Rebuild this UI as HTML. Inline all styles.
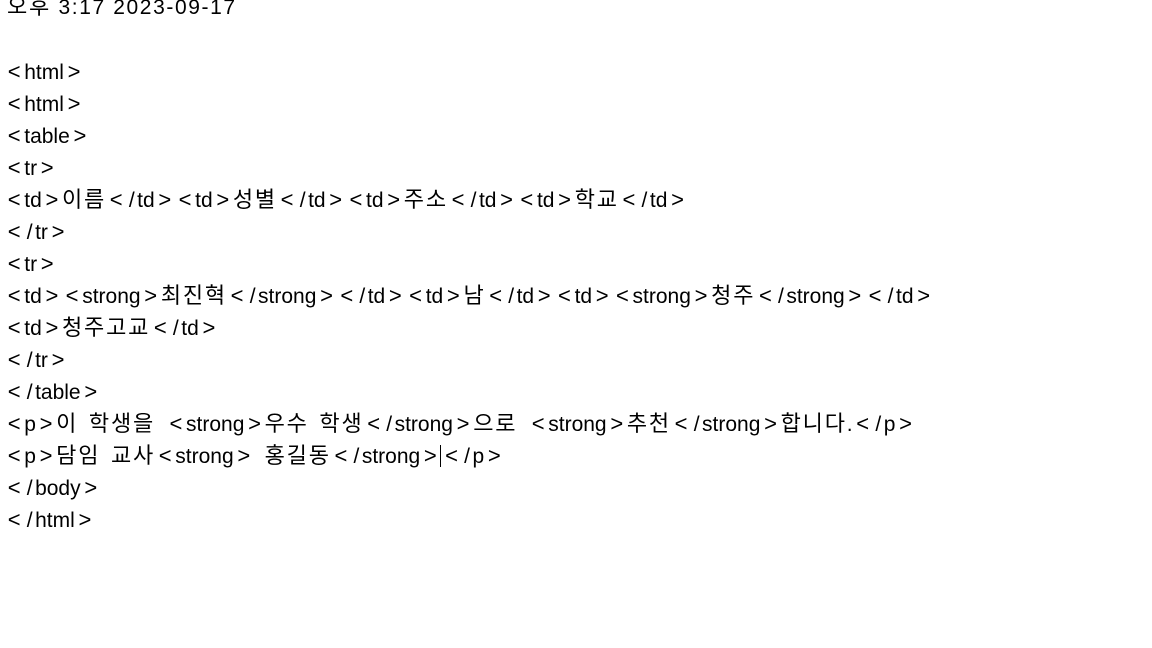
<!DOCTYPE html>
<html><head><meta charset="utf-8"><style>
body{margin:0;background:#fff;width:1152px;height:648px;overflow:hidden}
.t{position:absolute;left:4px;top:-8px;font-family:"Liberation Sans","Noto Sans CJK KR","NanumGothic",sans-serif;font-size:21px;color:#000}
.t div{height:32px;line-height:32px;white-space:pre}
i{font-style:normal;font-family:"Noto Sans CJK KR","NanumGothic",sans-serif;font-size:22px;letter-spacing:1.8px;word-spacing:4px;line-height:1}
u{text-decoration:none;margin:0 3.7px;font-size:22px}
s{text-decoration:none;margin:0 2.5px}
.c{display:inline-block;width:1px;height:22px;background:#000;vertical-align:-4px}
.h{letter-spacing:1.6px;padding-left:3px}
</style></head><body><div class="t"><div class="h"><i>오후</i> 3:17 2023-09-17</div><div></div><div><u>&lt;</u>html<u>&gt;</u></div><div><u>&lt;</u>html<u>&gt;</u></div><div><u>&lt;</u>table<u>&gt;</u></div><div><u>&lt;</u>tr<u>&gt;</u></div><div><u>&lt;</u>td<u>&gt;</u><i>이름</i><u>&lt;</u><s>/</s>td<u>&gt;</u><u>&lt;</u>td<u>&gt;</u><i>성별</i><u>&lt;</u><s>/</s>td<u>&gt;</u><u>&lt;</u>td<u>&gt;</u><i>주소</i><u>&lt;</u><s>/</s>td<u>&gt;</u><u>&lt;</u>td<u>&gt;</u><i>학교</i><u>&lt;</u><s>/</s>td<u>&gt;</u></div><div><u>&lt;</u><s>/</s>tr<u>&gt;</u></div><div><u>&lt;</u>tr<u>&gt;</u></div><div><u>&lt;</u>td<u>&gt;</u><u>&lt;</u>strong<u>&gt;</u><i>최진혁</i><u>&lt;</u><s>/</s>strong<u>&gt;</u><u>&lt;</u><s>/</s>td<u>&gt;</u><u>&lt;</u>td<u>&gt;</u><i>남</i><u>&lt;</u><s>/</s>td<u>&gt;</u><u>&lt;</u>td<u>&gt;</u><u>&lt;</u>strong<u>&gt;</u><i>청주</i><u>&lt;</u><s>/</s>strong<u>&gt;</u><u>&lt;</u><s>/</s>td<u>&gt;</u></div><div><u>&lt;</u>td<u>&gt;</u><i>청주고교</i><u>&lt;</u><s>/</s>td<u>&gt;</u></div><div><u>&lt;</u><s>/</s>tr<u>&gt;</u></div><div><u>&lt;</u><s>/</s>table<u>&gt;</u></div><div><u>&lt;</u>p<u>&gt;</u><i>이 학생을 </i><u>&lt;</u>strong<u>&gt;</u><i>우수 학생</i><u>&lt;</u><s>/</s>strong<u>&gt;</u><i>으로 </i><u>&lt;</u>strong<u>&gt;</u><i>추천</i><u>&lt;</u><s>/</s>strong<u>&gt;</u><i>합니다</i>.<u>&lt;</u><s>/</s>p<u>&gt;</u></div><div><u>&lt;</u>p<u>&gt;</u><i>담임 교사</i><u>&lt;</u>strong<u>&gt;</u><i> 홍길동</i><u>&lt;</u><s>/</s>strong<u>&gt;</u><span class="c"></span><u>&lt;</u><s>/</s>p<u>&gt;</u></div><div><u>&lt;</u><s>/</s>body<u>&gt;</u></div><div><u>&lt;</u><s>/</s>html<u>&gt;</u></div></div></body></html>
